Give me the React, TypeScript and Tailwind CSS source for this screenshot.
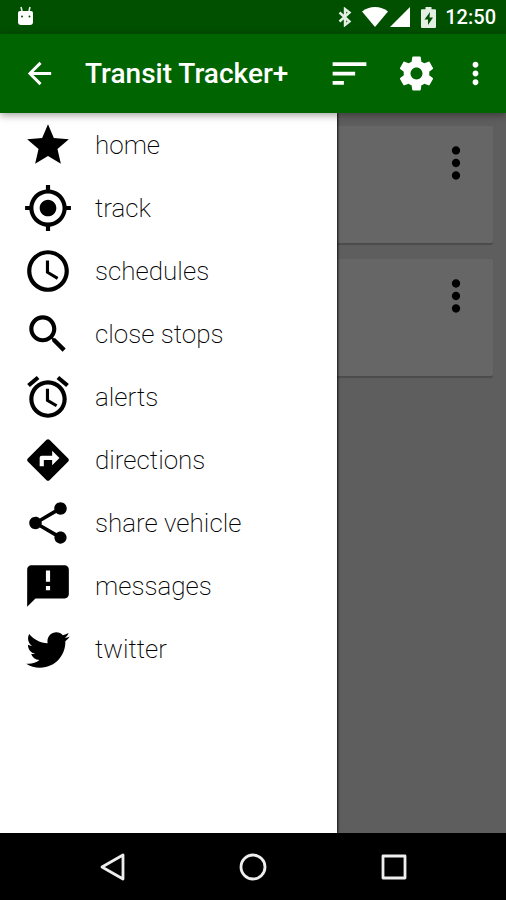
import { useState } from 'react';
import type { ReactNode } from 'react';

const ICONS = {
  back: 'M20 11H7.83l5.59-5.59L12 4l-8 8 8 8 1.41-1.41L7.83 13H20v-2z',
  sort: 'M3 18h6v-2H3v2zM3 6v2h18V6H3zm0 7h12v-2H3v2z',
  settings:
    'M19.43 12.98c.04-.32.07-.64.07-.98s-.03-.66-.07-.98l2.11-1.65c.19-.15.24-.42.12-.64l-2-3.46c-.12-.22-.39-.3-.61-.22l-2.49 1c-.52-.4-1.08-.73-1.69-.98l-.38-2.65C14.46 2.18 14.25 2 14 2h-4c-.25 0-.46.18-.49.42l-.38 2.65c-.61.25-1.17.59-1.69.98l-2.49-1c-.23-.09-.49 0-.61.22l-2 3.46c-.13.22-.07.49.12.64l2.11 1.65c-.04.32-.07.65-.07.98s.03.66.07.98l-2.11 1.65c-.19.15-.24.42-.12.64l2 3.46c.12.22.39.3.61.22l2.49-1c.52.4 1.08.73 1.69.98l.38 2.65c.03.24.24.42.49.42h4c.25 0 .46-.18.49-.42l.38-2.65c.61-.25 1.17-.59 1.69-.98l2.49 1c.23.09.49 0 .61-.22l2-3.46c.12-.22.07-.49-.12-.64l-2.11-1.65zM12 15.5c-1.93 0-3.5-1.57-3.5-3.5s1.57-3.5 3.5-3.5 3.5 1.57 3.5 3.5-1.57 3.5-3.5 3.5z',
  more: 'M12 8c1.1 0 2-.9 2-2s-.9-2-2-2-2 .9-2 2 .9 2 2 2zm0 2c-1.1 0-2 .9-2 2s.9 2 2 2 2-.9 2-2-.9-2-2-2zm0 6c-1.1 0-2 .9-2 2s.9 2 2 2 2-.9 2-2-.9-2-2-2z',
  star: 'M12 17.27L18.18 21l-1.64-7.03L22 9.24l-7.19-.61L12 2 9.19 8.63 2 9.24l5.46 4.73L5.82 21z',
  gps: 'M12 8c-2.21 0-4 1.79-4 4s1.79 4 4 4 4-1.79 4-4-1.79-4-4-4zm8.94 3c-.46-4.17-3.77-7.48-7.94-7.94V1h-2v2.06C6.83 3.52 3.52 6.83 3.06 11H1v2h2.06c.46 4.17 3.77 7.48 7.94 7.94V23h2v-2.06c4.17-.46 7.48-3.77 7.94-7.94H23v-2h-2.06zM12 19c-3.87 0-7-3.13-7-7s3.13-7 7-7 7 3.13 7 7-3.13 7-7 7z',
  clock:
    'M11.99 2C6.47 2 2 6.48 2 12s4.47 10 9.99 10C17.52 22 22 17.52 22 12S17.52 2 11.99 2zM12 20c-4.42 0-8-3.58-8-8s3.58-8 8-8 8 3.58 8 8-3.58 8-8 8zm.5-13H11v6l5.25 3.15.75-1.23-4.5-2.67z',
  search:
    'M15.5 14h-.79l-.28-.27C15.41 12.59 16 11.11 16 9.5 16 5.91 13.09 3 9.5 3S3 5.91 3 9.5 5.91 16 9.5 16c1.61 0 3.09-.59 4.23-1.57l.27.28v.79l5 4.99L20.49 19l-4.99-5zm-6 0C7.01 14 5 11.99 5 9.5S7.01 5 9.5 5 14 7.01 14 9.5 11.99 14 9.5 14z',
  alarm:
    'M22 5.72l-4.6-3.86-1.29 1.53 4.6 3.86L22 5.72zM7.88 3.39L6.6 1.86 2 5.71l1.29 1.53 4.59-3.85zM12.5 8H11v6l4.75 2.85.75-1.23-4-2.37V8zM12 4c-4.97 0-9 4.03-9 9s4.02 9 9 9c4.97 0 9-4.03 9-9s-4.03-9-9-9zm0 16c-3.87 0-7-3.13-7-7s3.13-7 7-7 7 3.13 7 7-3.13 7-7 7z',
  directions:
    'M21.71 11.29l-9-9c-.39-.39-1.02-.39-1.41 0l-9 9c-.39.39-.39 1.02 0 1.41l9 9c.39.39 1.02.39 1.41 0l9-9c.39-.38.39-1.01 0-1.41zM14 14.5V12h-4v3H8v-4c0-.55.45-1 1-1h5V7.5l3.5 3.5-3.5 3.5z',
  share:
    'M18 16.08c-.76 0-1.44.3-1.96.77L8.91 12.7c.05-.23.09-.46.09-.7s-.04-.47-.09-.7l7.05-4.11c.54.5 1.25.81 2.04.81 1.66 0 3-1.34 3-3s-1.34-3-3-3-3 1.34-3 3c0 .24.04.47.09.7L8.04 9.81C7.5 9.31 6.79 9 6 9c-1.66 0-3 1.34-3 3s1.34 3 3 3c.79 0 1.5-.31 2.04-.81l7.12 4.16c-.05.21-.08.43-.08.65 0 1.61 1.31 2.92 2.92 2.92 1.61 0 2.92-1.31 2.92-2.92s-1.31-2.92-2.92-2.92z',
  feedback:
    'M20 2H4c-1.1 0-1.99.9-1.99 2L2 22l4-4h14c1.1 0 2-.9 2-2V4c0-1.1-.9-2-2-2zm-7 12h-2v-2h2v2zm0-4h-2V4.5h2V10z',
  twitter:
    'M22.46 6c-.77.35-1.6.58-2.46.69.88-.53 1.56-1.37 1.88-2.38-.83.5-1.75.85-2.72 1.05C18.37 4.5 17.26 4 16 4c-2.35 0-4.27 1.92-4.27 4.29 0 .34.04.67.11.98C8.28 9.09 5.11 7.38 3 4.79c-.37.63-.58 1.37-.58 2.15 0 1.49.75 2.81 1.91 3.56-.71 0-1.37-.2-1.95-.5v.03c0 2.08 1.48 3.82 3.44 4.21a4.22 4.22 0 0 1-1.93.07 4.28 4.28 0 0 0 4 2.98 8.521 8.521 0 0 1-5.33 1.84c-.34 0-.68-.02-1.02-.06C3.44 20.29 5.7 21 8.12 21 16 21 20.33 14.46 20.33 8.79c0-.19 0-.37-.01-.56.84-.6 1.56-1.36 2.14-2.23z',
};

type IconName = keyof typeof ICONS;

const MENU: { label: string; icon: IconName }[] = [
  { label: 'home', icon: 'star' },
  { label: 'track', icon: 'gps' },
  { label: 'schedules', icon: 'clock' },
  { label: 'close stops', icon: 'search' },
  { label: 'alerts', icon: 'alarm' },
  { label: 'directions', icon: 'directions' },
  { label: 'share vehicle', icon: 'share' },
  { label: 'messages', icon: 'feedback' },
  { label: 'twitter', icon: 'twitter' },
];

function Icon({ name, className }: { name: IconName; className: string }) {
  return (
    <svg viewBox="0 0 24 24" fill="currentColor" aria-hidden="true" className={`shrink-0 ${className}`}>
      <path d={ICONS[name]} />
    </svg>
  );
}

function StatusBar() {
  return (
    <div className="flex h-[34px] shrink-0 items-center bg-[#005000] pr-[10px] pl-[17px] text-white">
      <svg viewBox="0 0 18 20" className="mb-[2px] h-5 w-[18px]" aria-hidden="true">
        <path d="M4 1l1 4M13 1l-1 4" stroke="#e4efe4" strokeWidth="1.600" />
        <path d="M1 7q0-2 2-2h11q2 0 2 2v9q0 3-3 3H4q-3 0-3-3z" fill="#fff" />
        <circle cx="5" cy="10.500" r="1" fill="#005000" />
        <circle cx="12.500" cy="10.500" r="1" fill="#005000" />
      </svg>
      <div className="ml-auto flex items-center">
        <svg viewBox="0 0 14 20" className="mr-[10px] h-5 w-[14px]" fill="none" stroke="#e4efe4" strokeWidth="2.400" aria-hidden="true">
          <path d="M1.500 5.500l10 9L7 18v-16l4.500 3.500-10 9" />
        </svg>
        <svg viewBox="0 0 26 20" className="mr-[2px] h-5 w-[26px]" fill="currentColor" aria-hidden="true">
          <path d="M0 4.500Q5.500 0 13 0t13 4.500L13 20z" />
        </svg>
        <svg viewBox="0 0 20 20" className="mr-[11px] h-5 w-5" fill="currentColor" aria-hidden="true">
          <path d="M20 0v20H0z" />
        </svg>
        <svg viewBox="0 0 15 21" className="mr-[9px] h-[21px] w-[15px]" aria-hidden="true">
          <path d="M4.500 0h6v2.200H14q1 0 1 1V20q0 1-1 1H1q-1 0-1-1V3.200q0-1 1-1h3.500z" fill="#e4efe4" />
          <path d="M9 5l-5.500 7.500H7V18l5-7.500H8.500z" fill="#005000" />
        </svg>
        <span className="text-[20px] leading-6 font-medium">12:50</span>
      </div>
    </div>
  );
}

function AppBar({ onBack }: { onBack: () => void }) {
  return (
    <header className="relative z-10 flex h-[79px] shrink-0 items-center bg-[#006400] pr-[5px] pl-[22px] text-white shadow-[0_2px_8px_rgba(0,0,0,0.4)]">
      <button type="button" aria-label="Back" onClick={onBack}>
        <Icon name="back" className="size-[35px]" />
      </button>
      <h1 className="ml-7 flex-1 text-[28px] leading-8 font-medium whitespace-nowrap">Transit Tracker+</h1>
      <button type="button" aria-label="Sort" className="flex w-[68px] justify-center">
        <Icon name="sort" className="size-[45px]" />
      </button>
      <button type="button" aria-label="Settings" className="flex w-[67px] justify-center">
        <Icon name="settings" className="size-[41px]" />
      </button>
      <button type="button" aria-label="More options" className="flex w-[51px] justify-center">
        <Icon name="more" className="size-[35px]" />
      </button>
    </header>
  );
}

function StopCard() {
  return (
    <div className="flex h-[117px] justify-end rounded-[2px] bg-white p-3 shadow-[0_2px_1px_rgba(0,0,0,0.2)]">
      <button type="button" aria-label="Stop options" className="h-[50px]">
        <Icon name="more" className="size-[50px]" />
      </button>
    </div>
  );
}

function Drawer() {
  return (
    <nav className="absolute inset-y-0 left-0 w-2/3 bg-white shadow-[1px_0_2px_rgba(0,0,0,0.8)]">
      <ul>
        {MENU.map((item) => (
          <li key={item.label}>
            <a href={`#${item.label.replace(' ', '-')}`} className="flex h-[63px] items-center pl-[23px]">
              <Icon name={item.icon} className="size-[50px]" />
              <span className="ml-[22px] text-[26px] leading-8 font-extralight">{item.label}</span>
            </a>
          </li>
        ))}
      </ul>
    </nav>
  );
}

function NavButton({ label, children }: { label: string; children: ReactNode }) {
  return (
    <button type="button" aria-label={label} className="flex h-full w-[141px] items-center justify-center">
      <svg viewBox="0 0 30 30" className="size-[30px]" fill="none" stroke="currentColor" strokeWidth="2.800" strokeLinejoin="round" aria-hidden="true">
        {children}
      </svg>
    </button>
  );
}

export default function App() {
  const [open, setOpen] = useState(true);

  return (
    <div className="flex min-h-screen flex-col bg-black font-[Roboto,sans-serif] text-black">
      <StatusBar />
      <AppBar onBack={() => setOpen(!open)} />
      <main className="relative min-h-[567px] flex-1 overflow-hidden bg-[#ebebeb]">
        <div className="flex flex-col gap-4 p-[13px]">
          <StopCard />
          <StopCard />
        </div>
        {open && (
          <>
            <div className="absolute inset-0 bg-black/60" onClick={() => setOpen(false)} />
            <Drawer />
          </>
        )}
      </main>
      <footer className="flex h-[67px] shrink-0 justify-center text-[#eeeeee]">
        <NavButton label="Back">
          <path d="M26 3v24L5 15z" />
        </NavButton>
        <NavButton label="Home">
          <circle cx="15" cy="15" r="12" />
        </NavButton>
        <NavButton label="Recent apps">
          <path d="M4 4h22v22H4z" />
        </NavButton>
      </footer>
    </div>
  );
}
